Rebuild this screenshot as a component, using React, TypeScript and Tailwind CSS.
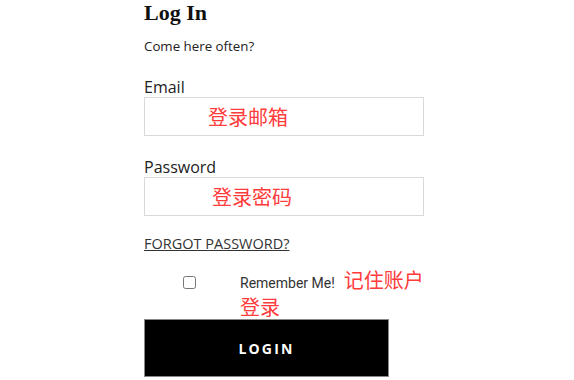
export default function App() {
  return (
    <div className="w-[574px] h-[380px] bg-white overflow-hidden">
      <div className="pl-[144px] flex flex-col">
        <h1 className="h-[26px] leading-[26px] text-[22px] font-bold text-[#111] [font-family:'Liberation_Serif',serif]">
          Log In
        </h1>
        <p className="mt-[10px] leading-[20px] text-[13.3px] text-[#222] [font-family:'Open_Sans',sans-serif]">
          Come here often?
        </p>

        <label className="mt-[21px] leading-[20px] text-[16px] text-[#222] [font-family:'Open_Sans',sans-serif]">Email</label>
        <div className="w-[280px] h-[39px] border border-[#d9d9d9] flex items-center pl-[63px]">
          <span className="text-[20px] text-[#ff3b3b] [font-family:'Noto_Sans_CJK_SC',sans-serif]">登录邮箱</span>
        </div>

        <label className="mt-[21px] leading-[20px] text-[16px] text-[#222] [font-family:'Open_Sans',sans-serif]">Password</label>
        <div className="w-[280px] h-[39px] border border-[#d9d9d9] flex items-center pl-[67px]">
          <span className="text-[20px] text-[#ff3b3b] [font-family:'Noto_Sans_CJK_SC',sans-serif]">登录密码</span>
        </div>

        <a className="mt-[18px] leading-[20px] text-[14.5px] text-[#333] underline self-start [font-family:'Open_Sans',sans-serif]">
          FORGOT PASSWORD?
        </a>

        <div className="mt-[14px] flex items-start h-[48px]">
          <input type="checkbox" className="ml-[39px] mt-[8px] w-[13px] h-[13px]" />
          <div className="ml-[44px] w-[192px] leading-[24px] [font-family:'Roboto',sans-serif]">
            <span className="text-[14px] text-[#333]">Remember Me!</span>
            <span className="ml-[9px] text-[20px] text-[#ff3b3b] [font-family:'Noto_Sans_CJK_SC',sans-serif]">记住账户</span>
            <br />
            <span className="text-[20px] text-[#ff3b3b] [font-family:'Noto_Sans_CJK_SC',sans-serif]">登录</span>
          </div>
        </div>

        <button className="mt-[3px] w-[245px] h-[58px] bg-black border border-[#888] text-white text-[14px] font-bold tracking-[2.2px] [font-family:'Open_Sans',sans-serif]">
          LOGIN
        </button>
      </div>
    </div>
  );
}
